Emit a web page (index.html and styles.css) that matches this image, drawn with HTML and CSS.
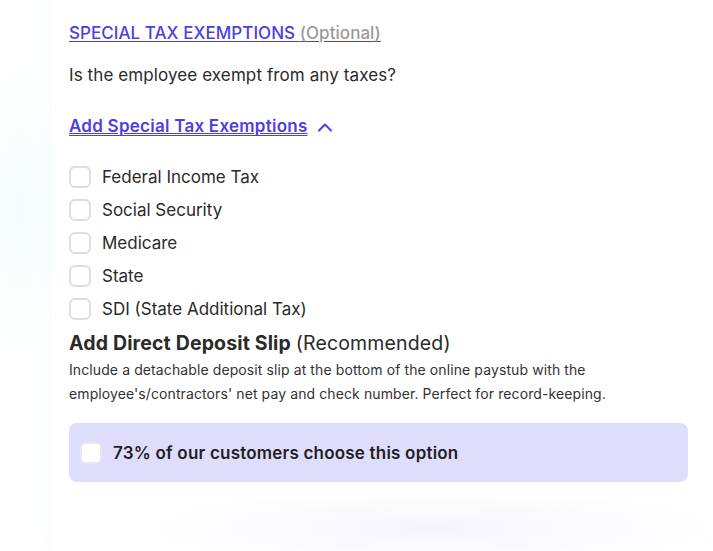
FILE: index.html
```html
<!DOCTYPE html>
<html lang="en">
<head>
  <meta charset="UTF-8" />
  <meta name="viewport" content="width=device-width, initial-scale=1.0"/>
  <title>Paystub options</title>
  <link rel="stylesheet" href="styles.css">
</head>
<body>
  <div class="card">
    <h3 class="section-title"><a href="#">SPECIAL TAX EXEMPTIONS <span class="optional">(Optional)</span></a></h3>
    <p class="question">Is the employee exempt from any taxes?</p>

    <a href="#" class="toggle">
      <span class="toggle-text">Add Special Tax Exemptions</span>
      <svg class="chevron" width="16" height="10" viewBox="0 0 16 10" fill="none">
        <path d="M2 8.5 L8 2.5 L14 8.5" stroke="currentColor" stroke-width="2" stroke-linecap="round" stroke-linejoin="round"/>
      </svg>
    </a>

    <ul class="checks">
      <li><label><input type="checkbox"><span>Federal Income Tax</span></label></li>
      <li><label><input type="checkbox"><span>Social Security</span></label></li>
      <li><label><input type="checkbox"><span>Medicare</span></label></li>
      <li><label><input type="checkbox"><span>State</span></label></li>
      <li><label><input type="checkbox"><span>SDI (State Additional Tax)</span></label></li>
    </ul>

    <h4 class="deposit-title">Add Direct Deposit Slip <span class="muted">(Recommended)</span></h4>
    <p class="deposit-desc">
      Include a detachable deposit slip at the bottom of the online paystub with the
      employee's/contractors' net pay and check number. Perfect for record-keeping.
    </p>

    <label class="promo">
      <input type="checkbox">
      <span>73% of our customers choose this option</span>
    </label>
  </div>
</body>
</html>
```

FILE: styles.css
```css
body {
  margin: 0;
  font-family: Inter, 'Noto Sans', sans-serif;
  color: #2a2a2a;
  background:
    radial-gradient(ellipse 50px 150px at 20px 210px, rgba(205, 245, 240, 0.25), transparent),
    #fff;
  height: 551px;
  overflow: hidden;
}
.card {
  margin: -20px 8px 0 52px;
  padding: 41px 17px 69px;
  background:
    radial-gradient(ellipse 280px 40px at 380px 548px, rgba(232, 232, 250, 0.45), transparent),
    #fff;
  box-shadow: -5px 0 12px rgba(215, 235, 240, 0.15);
}
.section-title {
  margin: 0;
  font-size: 17px;
  line-height: 24px;
  font-weight: 500;
  letter-spacing: 0.05px;
}
.section-title a {
  color: #4b3fe3;
  text-decoration: underline;
  text-underline-offset: 2px;
}
.optional {
  color: #9a9a9a;
}
.question {
  margin: 18px 0 0;
  font-size: 17px;
  line-height: 24px;
  letter-spacing: 0.1px;
}
.toggle {
  display: inline-flex;
  align-items: center;
  gap: 10px;
  margin-top: 27px;
  color: #4b3fe3;
  font-size: 17px;
  line-height: 24px;
  font-weight: 600;
  letter-spacing: 0.25px;
}
.toggle-text {
  text-decoration: underline;
  text-underline-offset: 3px;
}
.chevron {
  margin-top: 1px;
}
.checks {
  list-style: none;
  margin: 28px 0 0;
  padding: 0;
  display: flex;
  flex-direction: column;
  gap: 11px;
}
.checks label,
.promo {
  display: flex;
  align-items: center;
  gap: 11px;
  font-size: 17px;
  line-height: 22px;
  cursor: pointer;
}
input[type="checkbox"] {
  appearance: none;
  margin: 0;
  width: 22px;
  height: 22px;
  border: 2px solid #dedede;
  border-radius: 6px;
  background: #fff;
  flex-shrink: 0;
}
.deposit-title {
  margin: 10px 0 0;
  font-size: 19.5px;
  line-height: 26px;
  font-weight: 700;
  letter-spacing: 0.15px;
}
.muted {
  font-weight: 400;
}
.deposit-desc {
  margin: 2px 0 0;
  font-size: 14px;
  line-height: 24px;
  color: #333;
  letter-spacing: 0.1px;
}
.promo {
  margin-top: 17px;
  height: 59px;
  padding: 0 11px;
  background: #dfddfc;
  border-radius: 8px;
  font-weight: 600;
  color: #1f1f1f;
  letter-spacing: 0.2px;
}
.promo input[type="checkbox"] {
  border-color: #e9e9f3;
}
```
